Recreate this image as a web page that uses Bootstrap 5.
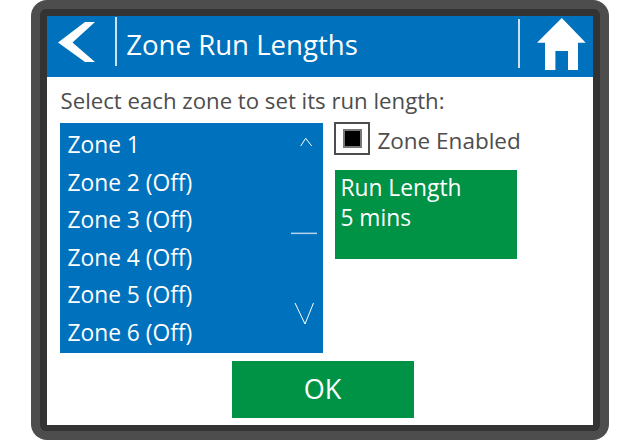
<!DOCTYPE html>
<html lang="en">
<head>
<meta charset="utf-8">
<title>Zone Run Lengths</title>
<link href="https://cdn.jsdelivr.net/npm/bootstrap@5.3.0/dist/css/bootstrap.min.css" rel="stylesheet">
<style>
html, body { margin: 0; height: 440px; overflow: hidden; background: #fff; }
body { font-family: "Open Sans", "Noto Sans", sans-serif; color: #4d4d4d; }
.dev-frame { width: 578px; height: 440px; margin-left: 31px; background: #4d4d4d; border-radius: 16px; padding: 9px; }
.dev-inner { height: 422px; background: #333; border-radius: 6px; padding: 7px 7px 6px 7px; }
.dev-screen { height: 409px; background: #fff; }
.hdr { height: 60.5px; background: #0071bc; color: #fff; }
.hdr-back { width: 67.5px; padding: 5.7px 0 0 11.3px; }
.hdr-sep { width: 2px; background: rgba(255,255,255,.8); }
.sep-a { height: 48.4px; margin-top: 1.3px; }
.sep-b { height: 48.5px; margin-top: 3.3px; }
.hdr-title { font-size: 27.6px; line-height: 57px; padding-left: 9.7px; width: 401px; }
.hdr-home { padding: 2px 0 0 17.8px; }
.prompt { font-size: 22.2px; line-height: 28px; padding: 10px 0 0 13.5px; height: 46.5px; }
.body-row { padding-left: 13px; }
.zone-list { width: 263px; height: 230px; background: #0071bc; color: #fff; padding: 3px 0 0 7.4px; font-size: 22.8px; }
.zone-row { height: 37.6px; line-height: 37.6px; }
.scroll-marks { right: 6px; top: 0; width: 26px; height: 230px; }
.side { padding-left: 12px; }
.check-line { height: 47px; }
.check-box { width: 36px; height: 33px; border: 2px solid #4d4d4d; margin: -1px 0 0 -1px; padding: 5px 7px; }
.check-fill { width: 19px; height: 19px; background: #000; border: 2px solid #777; }
.check-text { font-size: 22.5px; padding-left: 7.4px; line-height: 36px; }
.run-box { width: 182px; height: 89px; background: #009245; color: #fff; font-size: 22.8px; line-height: 30px; padding: 3px 0 0 5.4px; }
.ok-row { padding-top: 7.5px; padding-left: 185px; }
.ok-btn { width: 182px; height: 57.5px; background: #009245; color: #fff; font-size: 27px; line-height: 56px; border: 0; border-radius: 0; padding: 0 1px 0 0; }
.ok-btn:hover { background: #009245; color: #fff; }
</style>
</head>
<body>
<div class="dev-frame">
  <div class="dev-inner">
    <div class="dev-screen">
      <div class="hdr d-flex align-items-start">
        <div class="hdr-back">
          <svg width="37" height="40" viewBox="0 0 37 40" class="d-block"><polygon points="37,0 27,0 0,20.5 27,40 37,40 14.5,20.5" fill="#fff"/></svg>
        </div>
        <div class="hdr-sep sep-a"></div>
        <div class="hdr-title">Zone Run Lengths</div>
        <div class="hdr-sep sep-b"></div>
        <div class="hdr-home">
          <svg width="49" height="52" viewBox="0 0 49 52" class="d-block"><polygon points="24.8,0 48.7,24.7 41,24.7 41,52 31,52 31,33 18.4,33 18.4,52 8,52 8,24.7 0,24.7" fill="#fff"/></svg>
        </div>
      </div>
      <div class="prompt">Select each zone to set its run length:</div>
      <div class="body-row d-flex">
        <div class="zone-list position-relative">
          <div class="zone-row">Zone 1</div>
          <div class="zone-row">Zone 2 (Off)</div>
          <div class="zone-row">Zone 3 (Off)</div>
          <div class="zone-row">Zone 4 (Off)</div>
          <div class="zone-row">Zone 5 (Off)</div>
          <div class="zone-row">Zone 6 (Off)</div>
          <svg class="scroll-marks position-absolute" viewBox="0 0 26 230"><g fill="none" stroke="#fff" stroke-width="1"><path d="M9.7 23 L14.7 15.3 L20.7 23"/><path d="M4 180 L14 201 L22.5 180"/></g><rect x="0" y="109.6" width="26" height="1.5" fill="#b3d4eb"/></svg>
        </div>
        <div class="side">
          <div class="check-line d-flex align-items-start">
            <div class="check-box"><div class="check-fill"></div></div>
            <div class="check-text">Zone Enabled</div>
          </div>
          <div class="run-box">Run Length<br>5 mins</div>
        </div>
      </div>
      <div class="ok-row"><button type="button" class="btn ok-btn d-block">OK</button></div>
    </div>
  </div>
</div>
<script src="https://cdn.jsdelivr.net/npm/bootstrap@5.3.0/dist/js/bootstrap.bundle.min.js"></script>
</body>
</html>
